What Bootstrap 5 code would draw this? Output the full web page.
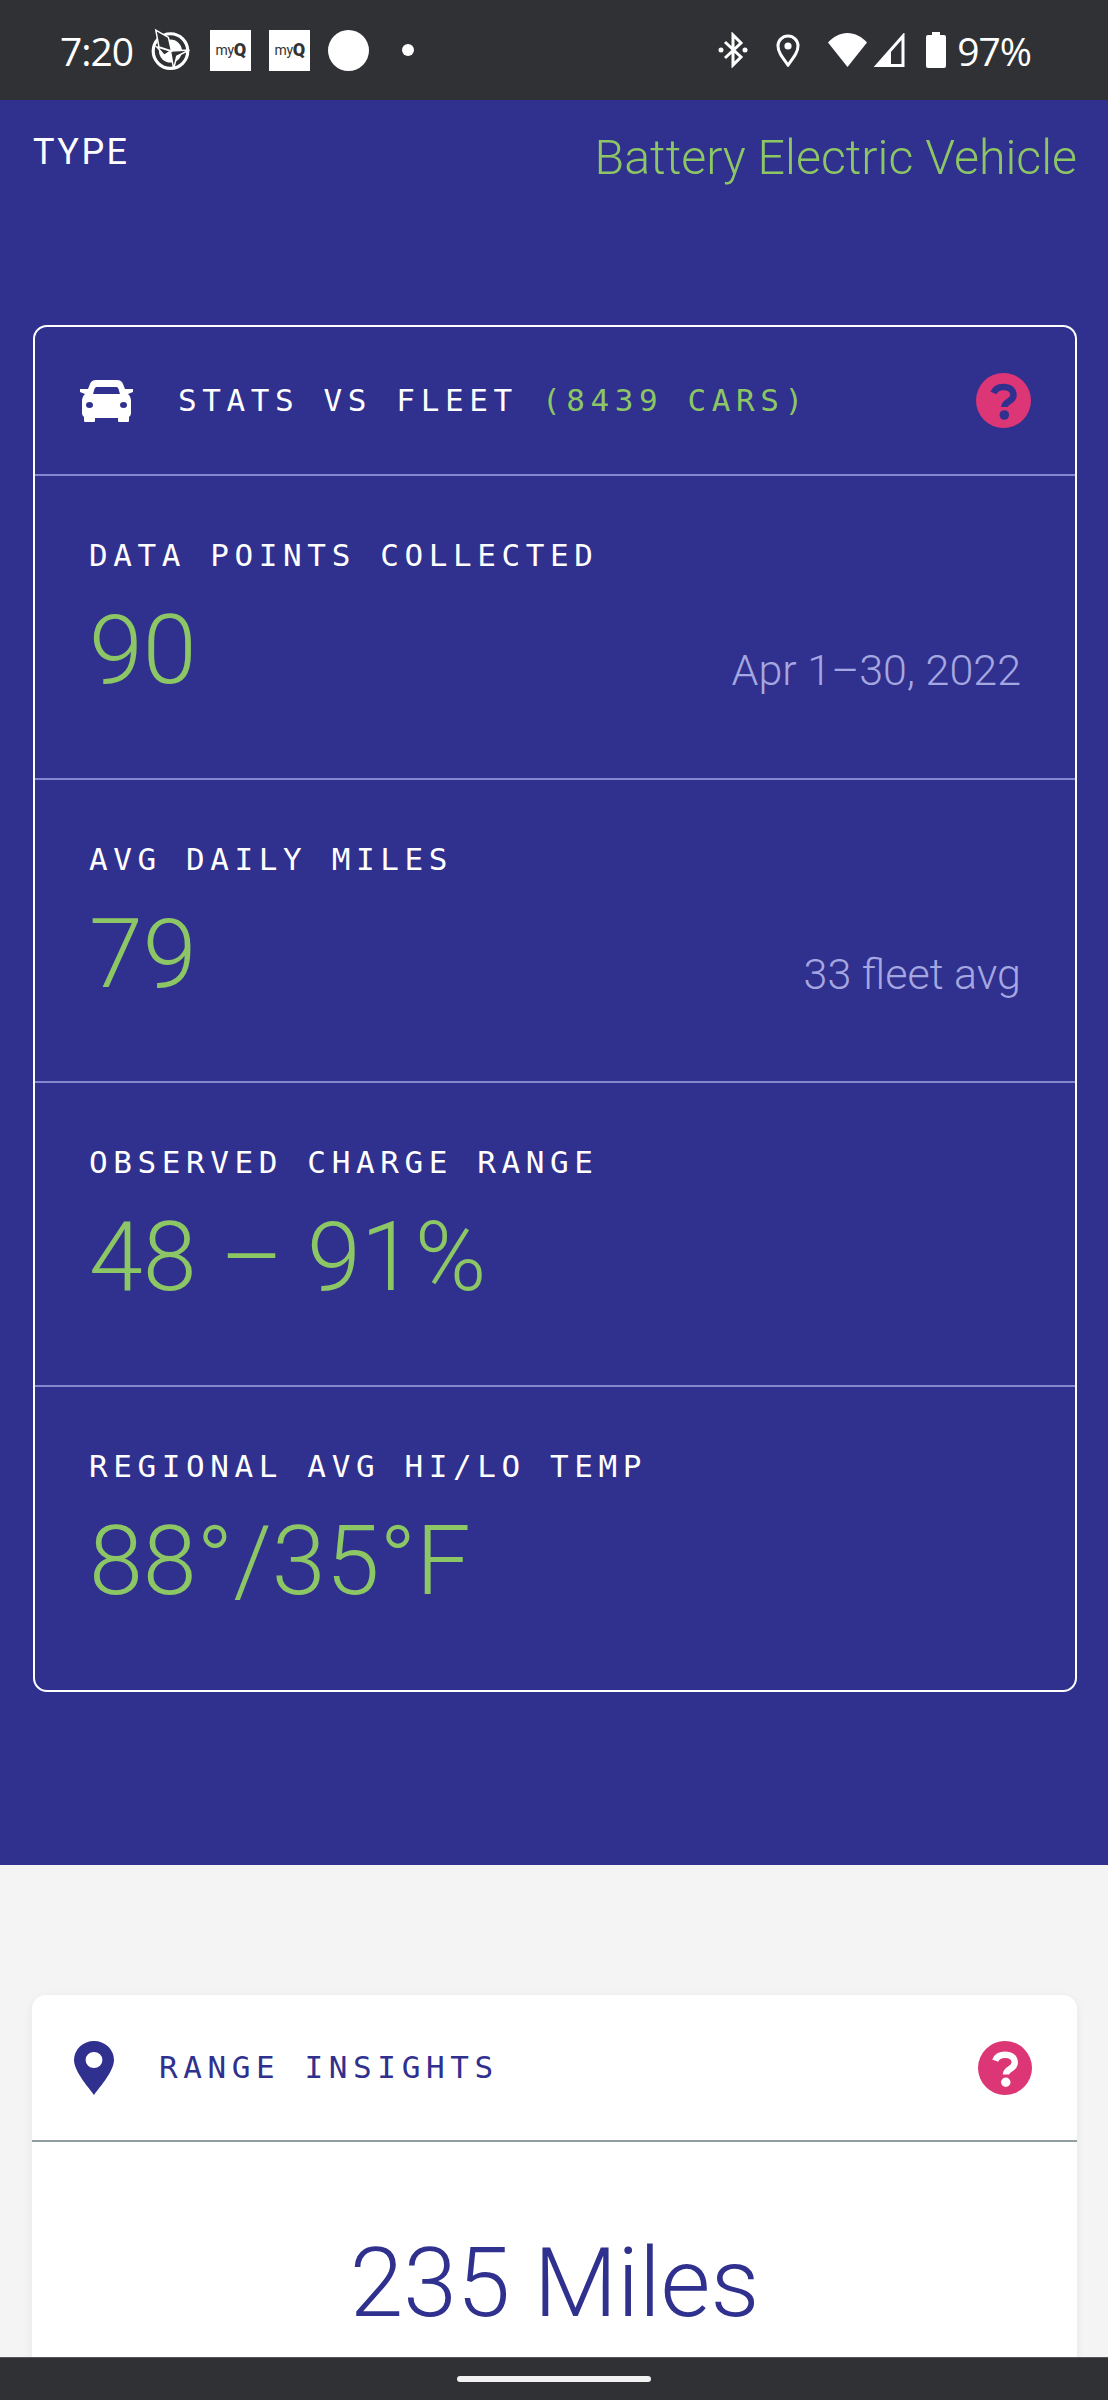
<!DOCTYPE html>
<html lang="en">
<head>
    <meta charset="UTF-8">
    <title>Stats vs Fleet</title>
    <link href="https://cdn.jsdelivr.net/npm/bootstrap@5.3.0/dist/css/bootstrap.min.css" rel="stylesheet">
    <style>
        body { background: #f4f4f4; font-family: Roboto, "Liberation Sans", sans-serif; height: 2400px; overflow: hidden; }

        /* status bar */
        .status-bar { background: #303135; color: #fff; height: 100px; padding: 0 77px 0 60px; }
        .status-text { font-family: "Open Sans", Roboto, sans-serif; font-size: 39px; font-weight: 500; letter-spacing: -1px; line-height: 1; }
        .status-icon { flex: none; }
        .myq-box { background: #fff; color: #333; width: 41px; height: 41px; font-size: 14px; line-height: 1; letter-spacing: -.3px; }
        .myq-box b { font-size: 18px; font-weight: 900; }
        .status-circle { width: 41px; height: 41px; background: #fff; border-radius: 50%; }
        .status-dot { width: 12px; height: 12px; background: #fff; border-radius: 50%; margin-left: 33px; }
        .gap-compass { margin-left: 17px; }
        .gap-notif { margin-left: 18px; }
        .gap-pin { margin-left: 28px; }
        .gap-wifi { margin-left: 27px; }
        .gap-signal { margin-left: 4px; }
        .gap-battery { margin-left: 19px; }
        .gap-level { margin-left: 10px; }

        /* blue section */
        .fleet-section { background: #30308e; height: 1765px; padding: 0 31px 0 33px; }
        .type-row { height: 225px; }
        .type-label { color: #fff; font-size: 36px; letter-spacing: 2.5px; line-height: 1; margin-top: 34px; }
        .type-value { color: #8cc665; font-size: 48.300px; font-weight: 300; line-height: 1; margin-top: 34px; }
        .fleet-card { background: transparent; border: 2px solid #fff; border-radius: 14px; color: #fff; height: 1367px; }
        .fleet-head { height: 150px; padding: 0 44px 0 45px; border-bottom: 2px solid #8587cf; }
        .mono-title { font-family: "DejaVu Sans Mono", monospace; font-size: 31px; letter-spacing: 5.600px; line-height: 1; white-space: nowrap; }
        .accent { color: #8cc665; }
        .stat-row { height: 304.500px; padding: 64px 54px 0 54px; border-bottom: 2px solid #8587cf; }
        .stat-row:last-child { border-bottom: 0; }
        .stat-number { color: #8cc665; font-size: 97px; font-weight: 300; line-height: 1; margin-top: 31px; }
        .stat-side { color: #a5a7e0; font-size: 43px; font-weight: 300; line-height: 1; margin-bottom: 7px; }

        /* range card */
        .range-section { padding: 130px 31px 0 32px; }
        .range-card { background: #fff; border: 0; border-radius: 14px; box-shadow: 0 2px 10px rgba(0, 0, 0, .06); height: 500px; overflow: hidden; color: #30308e; }
        .range-head { height: 147px; padding: 0 45px 0 42px; border-bottom: 2px solid #929d9f; }
        .range-value { font-size: 96.500px; font-weight: 300; line-height: 1; text-align: center; padding-top: 93px; }

        /* bottom nav */
        .nav-strip { background: #303135; height: 43px; border-top: 1px solid #55565a; }
        .home-pill { width: 194px; height: 6px; background: #f2f2f2; border-radius: 3px; }
    </style>
</head>
<body>

<div class="status-bar d-flex align-items-center">
    <span class="status-text">7:20</span>
    <svg class="status-icon gap-compass" width="42" height="44" viewBox="0 0 39 42">
        <circle cx="19" cy="22" r="16.500" fill="none" stroke="#fff" stroke-width="3"/>
        <circle cx="19" cy="22" r="11" fill="#fff"/>
        <path d="M5 2l12 7 3 13-12-4zM6 18l13 4-6 4zM19 22l18-1-12 6-3 12z" fill="#303135" stroke="#fff" stroke-width="1.400"/>
    </svg>
    <span class="myq-box gap-notif d-flex align-items-center justify-content-center">my<b>Q</b></span>
    <span class="myq-box gap-notif d-flex align-items-center justify-content-center">my<b>Q</b></span>
    <span class="status-circle gap-notif"></span>
    <span class="status-dot"></span>
    <div class="ms-auto d-flex align-items-center">
        <svg class="status-icon" width="30" height="36" viewBox="0 0 30 36">
            <path d="M7 10l16 15-8 8V3l8 8L7 26" fill="none" stroke="#fff" stroke-width="3"/>
            <circle cx="3" cy="18" r="2.500" fill="#fff"/><circle cx="27" cy="18" r="2.500" fill="#fff"/>
        </svg>
        <svg class="status-icon gap-pin" width="24" height="33" viewBox="0 0 24 33">
            <path d="M12 31C6 23 2 18 2 12a10 10 0 0 1 20 0c0 6-4 11-10 19z" fill="none" stroke="#fff" stroke-width="3"/>
            <circle cx="12" cy="12" r="3.600" fill="#fff"/>
        </svg>
        <svg class="status-icon gap-wifi" width="41" height="34" viewBox="0 0 39 34">
            <path d="M19.500 34L0 9.500C5 4 12 0 19.500 0S34 4 39 9.500z" fill="#fff"/>
        </svg>
        <svg class="status-icon gap-signal" width="34" height="34" viewBox="0 0 32 34">
            <path d="M16 18v14M30 3v29.500H4z" fill="none" stroke="#fff" stroke-width="3"/>
            <path d="M3 33L18 18v15z" fill="#fff"/>
        </svg>
        <svg class="status-icon gap-battery" width="22" height="36" viewBox="0 0 20 36">
            <path d="M6 0h8v3h4a2 2 0 0 1 2 2v29a2 2 0 0 1-2 2H2a2 2 0 0 1-2-2V5a2 2 0 0 1 2-2h4z" fill="#fff"/>
        </svg>
        <span class="status-text gap-level">97%</span>
    </div>
</div>

<section class="fleet-section">
    <div class="type-row d-flex justify-content-between align-items-start">
        <div class="type-label">TYPE</div>
        <div class="type-value">Battery Electric Vehicle</div>
    </div>

    <div class="card fleet-card">
        <div class="fleet-head d-flex align-items-center">
            <svg width="53" height="42" viewBox="0 0 53 42">
                <path d="M16 0h21c3 0 5 1.500 6 4l2 5h8v3l-5 2c2 2 3 4 3 7v12c0 2-1 3-2 4v3c0 2-1 3-3 3h-5c-2 0-3-1-3-3v-2H15v2c0 2-1 3-3 3H7c-2 0-3-1-3-3v-3c-1-1-2-2-2-4V21c0-3 1-5 3-7l-5-2V9h8l2-5c1-2.500 3-4 6-4z" fill="#fff"/>
                <path d="M17 7h19c1 0 2 .5 2.500 2l1.500 5H13l1.500-5c.5-1.500 1.500-2 2.500-2z" fill="#30308e"/>
                <ellipse cx="9.500" cy="25" rx="3.500" ry="3" fill="#30308e"/>
                <ellipse cx="43.500" cy="25" rx="3.500" ry="3" fill="#30308e"/>
            </svg>
            <div class="mono-title" style="margin-left:45px">STATS VS FLEET <span class="accent">(8439 CARS)</span></div>
            <svg class="ms-auto" width="55" height="55" viewBox="0 0 55 55">
                <circle cx="27.500" cy="27.500" r="27.500" fill="#dc3676"/>
                <path d="M17.500 20c1.500-4 5-6 10-6 6 0 10 3 10 8 0 7-9 6-9 12" fill="none" stroke="#30308e" stroke-width="6.500"/>
                <circle cx="28.300" cy="42" r="4.800" fill="#30308e"/>
            </svg>
        </div>

        <div class="stat-row">
            <div class="mono-title">DATA POINTS COLLECTED</div>
            <div class="d-flex justify-content-between align-items-end">
                <div class="stat-number">90</div>
                <div class="stat-side">Apr 1–30, 2022</div>
            </div>
        </div>
        <div class="stat-row">
            <div class="mono-title">AVG DAILY MILES</div>
            <div class="d-flex justify-content-between align-items-end">
                <div class="stat-number">79</div>
                <div class="stat-side">33 fleet avg</div>
            </div>
        </div>
        <div class="stat-row">
            <div class="mono-title">OBSERVED CHARGE RANGE</div>
            <div class="stat-number">48 – 91%</div>
        </div>
        <div class="stat-row">
            <div class="mono-title">REGIONAL AVG HI/LO TEMP</div>
            <div class="stat-number">88°/35°F</div>
        </div>
    </div>
</section>

<section class="range-section">
    <div class="card range-card">
        <div class="range-head d-flex align-items-center">
            <svg width="40" height="54" viewBox="0 0 38 54" preserveAspectRatio="none">
                <path fill-rule="evenodd" d="M19 54C16 49 0 31 0 19a19 19 0 0 1 38 0c0 12-16 30-19 35zM19 11a8 8 0 1 0 0 16 8 8 0 0 0 0-16z" fill="#30308e"/>
            </svg>
            <div class="mono-title" style="margin-left:45px">RANGE INSIGHTS</div>
            <svg class="ms-auto" width="54" height="54" viewBox="0 0 55 55">
                <circle cx="27.500" cy="27.500" r="27.500" fill="#dc3676"/>
                <path d="M17.500 20c1.500-4 5-6 10-6 6 0 10 3 10 8 0 7-9 6-9 12" fill="none" stroke="#fff" stroke-width="6.500"/>
                <circle cx="28.300" cy="42" r="4.800" fill="#fff"/>
            </svg>
        </div>
        <div class="range-value">235 Miles</div>
    </div>
</section>

<div class="nav-strip fixed-bottom d-flex justify-content-center align-items-center">
    <div class="home-pill"></div>
</div>

</body>
</html>
